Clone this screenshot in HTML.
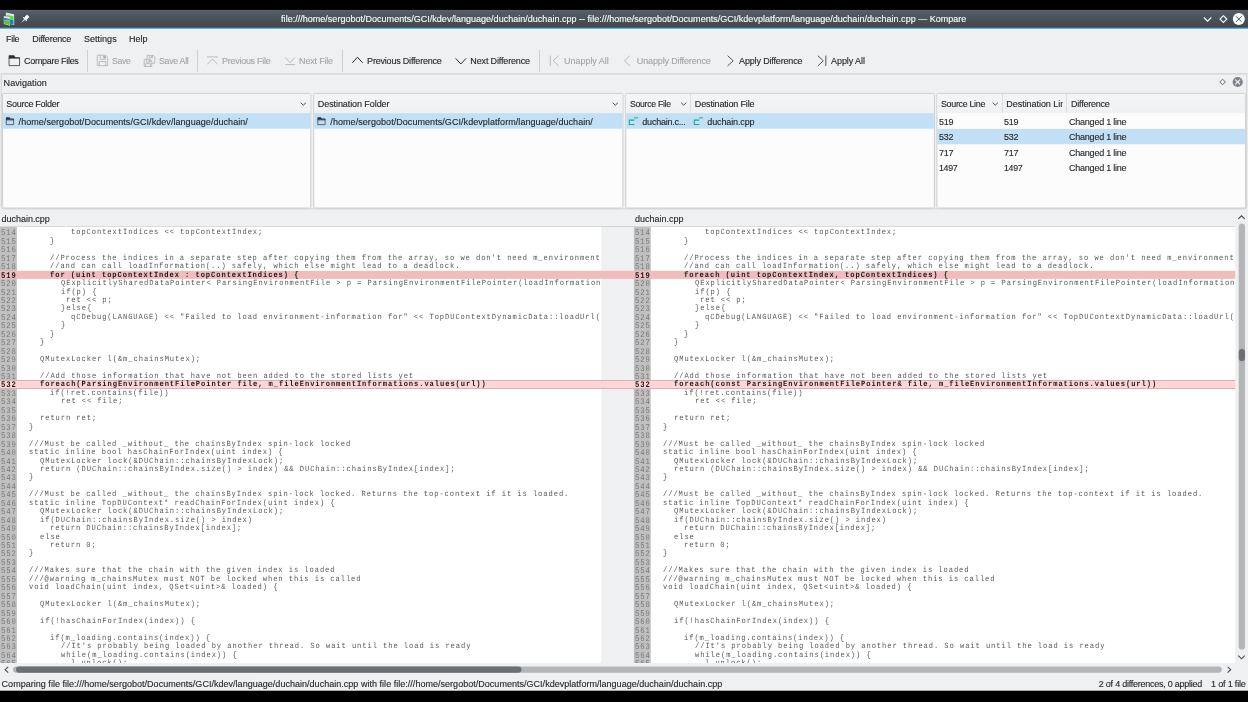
<!DOCTYPE html><html lang="en"><head><meta charset="utf-8"><title>Kompare</title><style>
html,body{margin:0;padding:0;background:#000;}
body{width:1248px;height:702px;position:relative;overflow:hidden;font-family:"Liberation Sans",sans-serif;}
.t{-webkit-text-stroke:0.12px;position:absolute;white-space:pre;line-height:12px;height:12px;transform-origin:0 50%;}
.abs{position:absolute;}
#ui{position:absolute;left:0;top:0;width:1248px;height:702px;will-change:transform;}
.sep{position:absolute;top:50px;height:21px;width:1px;background:#c9cbcd;}
.frame{position:absolute;border:1px solid #c3c5c7;box-sizing:border-box;background:#fcfcfc;border-radius:1.5px;}
.hdr{position:absolute;background:#f3f4f4;box-sizing:border-box;border-bottom:1px solid #e2e3e4;}
.sel{position:absolute;background:#c0e0f5;}
.pane{position:absolute;overflow:hidden;will-change:transform;text-rendering:geometricPrecision;font-family:"Liberation Mono",monospace;font-size:7.9px;letter-spacing:1.037px;color:#585858;}
.gut{position:absolute;left:0;top:0;width:17px;height:100%;background:#c0c0c0;}
.ln{position:absolute;left:0;width:100%;height:8.45px;line-height:8.45px;white-space:pre;}
.ln.b{font-weight:bold;color:#1a1a1a;}
.ln.b .no{color:#1a1a1a;}
.no{position:absolute;left:1.4px;color:#7a7a7a;font-size:8.6px;letter-spacing:1.030px;transform:scale(0.84,1);transform-origin:0 70%;}
.cd{position:absolute;transform:scale(0.9,1.0);transform-origin:0 70%;}
.band{position:absolute;left:0;width:1235.2px;}
</style></head><body>
<svg class="abs" style="left:0;top:0" width="1248" height="702" viewBox="0 0 1248 702" shape-rendering="geometricPrecision">
<defs><linearGradient id="tg" x1="0" y1="0" x2="0" y2="1"><stop offset="0" stop-color="#5a646c"/><stop offset="0.12" stop-color="#525c64"/><stop offset="0.9" stop-color="#42494f"/><stop offset="1" stop-color="#393e43"/></linearGradient><linearGradient id="hg" x1="0" y1="0" x2="0" y2="1"><stop offset="0" stop-color="#f5f5f6"/><stop offset="1" stop-color="#f0f1f2"/></linearGradient></defs>
<rect x="0" y="10.6" width="1248.00" height="680.10" fill="#eff0f1" />
<rect x="0" y="9.9" width="1248.00" height="17.95" fill="url(#tg)" />
<rect x="0" y="27.85" width="1248.00" height="1.10" fill="#3daee9" />
<rect x="0" y="28.95" width="1248.00" height="0.85" fill="#fbfbfb" />
<rect x="0" y="73.5" width="1248.00" height="0.90" fill="#d0d2d4" />
<rect x="87.2" y="49.8" width="0.80" height="21.80" fill="#c6c8ca" />
<rect x="197.2" y="49.8" width="0.80" height="21.80" fill="#c6c8ca" />
<rect x="342.2" y="49.8" width="0.80" height="21.80" fill="#c6c8ca" />
<rect x="539.2" y="49.8" width="0.80" height="21.80" fill="#c6c8ca" />
<rect x="1.3" y="74.0" width="1245.4" height="134.9" rx="2.2" fill="#eff0f1" stroke="#cdcfd1" stroke-width="0.9"/>
<rect x="2.6" y="93.4" width="308.20" height="114.60" rx="1.3" fill="#fcfcfc" stroke="#c9cbcd" stroke-width="0.9"/>
<rect x="3.1" y="93.9" width="307.20" height="19.20" fill="url(#hg)" />
<rect x="313.7" y="93.4" width="309.20" height="114.60" rx="1.3" fill="#fcfcfc" stroke="#c9cbcd" stroke-width="0.9"/>
<rect x="314.2" y="93.9" width="308.20" height="19.20" fill="url(#hg)" />
<rect x="625.8" y="93.4" width="308.60" height="114.60" rx="1.3" fill="#fcfcfc" stroke="#c9cbcd" stroke-width="0.9"/>
<rect x="626.3" y="93.9" width="307.60" height="19.20" fill="url(#hg)" />
<rect x="936.9" y="93.4" width="308.70" height="114.60" rx="1.3" fill="#fcfcfc" stroke="#c9cbcd" stroke-width="0.9"/>
<rect x="937.4" y="93.9" width="307.70" height="19.20" fill="url(#hg)" />
<rect x="3.1" y="113.1" width="307.20" height="15.65" fill="#c2e0f5" />
<rect x="314.2" y="113.1" width="308.20" height="15.65" fill="#c2e0f5" />
<rect x="626.3" y="113.1" width="307.60" height="15.65" fill="#c2e0f5" />
<rect x="937.4" y="128.9" width="307.70" height="15.40" fill="#c2e0f5" />
<rect x="690.2" y="94.0" width="0.80" height="18.80" fill="#d6d8d9" />
<rect x="1002.0" y="94.0" width="0.80" height="18.80" fill="#d6d8d9" />
<rect x="1066.2" y="94.0" width="0.80" height="18.80" fill="#d6d8d9" />
<rect x="0" y="226.0" width="1235.20" height="0.80" fill="#c9cbcd" />
<rect x="0" y="226.8" width="601.30" height="436.20" fill="#ffffff" />
<rect x="633.9" y="226.8" width="601.30" height="436.20" fill="#ffffff" />
<rect x="0" y="226.8" width="16.90" height="436.20" fill="#c0c0c0" />
<rect x="633.9" y="226.8" width="16.80" height="436.20" fill="#c0c0c0" />
<rect x="0" y="270.8" width="1235.20" height="8.05" fill="#f0bcbc" />
<rect x="0" y="380.0" width="1235.20" height="8.80" fill="#ffd6d6" />
<rect x="0" y="380.0" width="1235.20" height="0.70" fill="#d29c9c" />
<rect x="0" y="388.1" width="1235.20" height="0.70" fill="#d29c9c" />
<rect x="1238.7" y="223.6" width="6.3" height="426.0" rx="3.15" fill="#b3b5b7"/>
<rect x="1238.7" y="348.9" width="6.3" height="12.2" rx="3.15" fill="#6c6f73"/>
<rect x="13.0" y="666.4" width="1208.8" height="6.3" rx="3.15" fill="#b3b5b7"/>
<rect x="16.0" y="666.4" width="505.5" height="6.3" rx="3.15" fill="#6c6f73"/>
</svg>
<div class="pane" style="left:0px;width:601.30px;top:226.8px;height:436.20px">
<div class="ln" style="top:2.35px"><span class="no">514</span><span class="cd" style="left:70.90px">topContextIndices &lt;&lt; topContextIndex;</span></div>
<div class="ln" style="top:10.80px"><span class="no">515</span><span class="cd" style="left:50.10px">}</span></div>
<div class="ln" style="top:19.25px"><span class="no">516</span><span class="cd" style="left:29.30px"></span></div>
<div class="ln" style="top:27.70px"><span class="no">517</span><span class="cd" style="left:50.10px">//Process the indices in a separate step after copying them from the array, so we don't need m_environment</span></div>
<div class="ln" style="top:36.15px"><span class="no">518</span><span class="cd" style="left:50.10px">//and can call loadInformation(..) safely, which else might lead to a deadlock.</span></div>
<div class="ln b" style="top:44.60px"><span class="no">519</span><span class="cd" style="left:50.10px">for (uint topContextIndex : topContextIndices) {</span></div>
<div class="ln" style="top:53.05px"><span class="no">520</span><span class="cd" style="left:60.50px">QExplicitlySharedDataPointer&lt; ParsingEnvironmentFile &gt; p = ParsingEnvironmentFilePointer(loadInformation</span></div>
<div class="ln" style="top:61.50px"><span class="no">521</span><span class="cd" style="left:60.50px">if(p) {</span></div>
<div class="ln" style="top:69.95px"><span class="no">522</span><span class="cd" style="left:65.70px">ret &lt;&lt; p;</span></div>
<div class="ln" style="top:78.40px"><span class="no">523</span><span class="cd" style="left:60.50px">}else{</span></div>
<div class="ln" style="top:86.85px"><span class="no">524</span><span class="cd" style="left:70.90px">qCDebug(LANGUAGE) &lt;&lt; "Failed to load environment-information for" &lt;&lt; TopDUContextDynamicData::loadUrl(</span></div>
<div class="ln" style="top:95.30px"><span class="no">525</span><span class="cd" style="left:60.50px">}</span></div>
<div class="ln" style="top:103.75px"><span class="no">526</span><span class="cd" style="left:50.10px">}</span></div>
<div class="ln" style="top:112.20px"><span class="no">527</span><span class="cd" style="left:39.70px">}</span></div>
<div class="ln" style="top:120.65px"><span class="no">528</span><span class="cd" style="left:29.30px"></span></div>
<div class="ln" style="top:129.10px"><span class="no">529</span><span class="cd" style="left:39.70px">QMutexLocker l(&amp;m_chainsMutex);</span></div>
<div class="ln" style="top:137.55px"><span class="no">530</span><span class="cd" style="left:29.30px"></span></div>
<div class="ln" style="top:146.00px"><span class="no">531</span><span class="cd" style="left:39.70px">//Add those information that have not been added to the stored lists yet</span></div>
<div class="ln b" style="top:154.45px"><span class="no">532</span><span class="cd" style="left:39.70px">foreach(ParsingEnvironmentFilePointer file, m_fileEnvironmentInformations.values(url))</span></div>
<div class="ln" style="top:162.90px"><span class="no">533</span><span class="cd" style="left:50.10px">if(!ret.contains(file))</span></div>
<div class="ln" style="top:171.35px"><span class="no">534</span><span class="cd" style="left:60.50px">ret &lt;&lt; file;</span></div>
<div class="ln" style="top:179.80px"><span class="no">535</span><span class="cd" style="left:29.30px"></span></div>
<div class="ln" style="top:188.25px"><span class="no">536</span><span class="cd" style="left:39.70px">return ret;</span></div>
<div class="ln" style="top:196.70px"><span class="no">537</span><span class="cd" style="left:29.30px">}</span></div>
<div class="ln" style="top:205.15px"><span class="no">538</span><span class="cd" style="left:29.30px"></span></div>
<div class="ln" style="top:213.60px"><span class="no">539</span><span class="cd" style="left:29.30px">///Must be called _without_ the chainsByIndex spin-lock locked</span></div>
<div class="ln" style="top:222.05px"><span class="no">540</span><span class="cd" style="left:29.30px">static inline bool hasChainForIndex(uint index) {</span></div>
<div class="ln" style="top:230.50px"><span class="no">541</span><span class="cd" style="left:39.70px">QMutexLocker lock(&amp;DUChain::chainsByIndexLock);</span></div>
<div class="ln" style="top:238.95px"><span class="no">542</span><span class="cd" style="left:39.70px">return (DUChain::chainsByIndex.size() &gt; index) &amp;&amp; DUChain::chainsByIndex[index];</span></div>
<div class="ln" style="top:247.40px"><span class="no">543</span><span class="cd" style="left:29.30px">}</span></div>
<div class="ln" style="top:255.85px"><span class="no">544</span><span class="cd" style="left:29.30px"></span></div>
<div class="ln" style="top:264.30px"><span class="no">545</span><span class="cd" style="left:29.30px">///Must be called _without_ the chainsByIndex spin-lock locked. Returns the top-context if it is loaded.</span></div>
<div class="ln" style="top:272.75px"><span class="no">546</span><span class="cd" style="left:29.30px">static inline TopDUContext* readChainForIndex(uint index) {</span></div>
<div class="ln" style="top:281.20px"><span class="no">547</span><span class="cd" style="left:39.70px">QMutexLocker lock(&amp;DUChain::chainsByIndexLock);</span></div>
<div class="ln" style="top:289.65px"><span class="no">548</span><span class="cd" style="left:39.70px">if(DUChain::chainsByIndex.size() &gt; index)</span></div>
<div class="ln" style="top:298.10px"><span class="no">549</span><span class="cd" style="left:50.10px">return DUChain::chainsByIndex[index];</span></div>
<div class="ln" style="top:306.55px"><span class="no">550</span><span class="cd" style="left:39.70px">else</span></div>
<div class="ln" style="top:315.00px"><span class="no">551</span><span class="cd" style="left:50.10px">return 0;</span></div>
<div class="ln" style="top:323.45px"><span class="no">552</span><span class="cd" style="left:29.30px">}</span></div>
<div class="ln" style="top:331.90px"><span class="no">553</span><span class="cd" style="left:29.30px"></span></div>
<div class="ln" style="top:340.35px"><span class="no">554</span><span class="cd" style="left:29.30px">///Makes sure that the chain with the given index is loaded</span></div>
<div class="ln" style="top:348.80px"><span class="no">555</span><span class="cd" style="left:29.30px">///@warning m_chainsMutex must NOT be locked when this is called</span></div>
<div class="ln" style="top:357.25px"><span class="no">556</span><span class="cd" style="left:29.30px">void loadChain(uint index, QSet&lt;uint&gt;&amp; loaded) {</span></div>
<div class="ln" style="top:365.70px"><span class="no">557</span><span class="cd" style="left:29.30px"></span></div>
<div class="ln" style="top:374.15px"><span class="no">558</span><span class="cd" style="left:39.70px">QMutexLocker l(&amp;m_chainsMutex);</span></div>
<div class="ln" style="top:382.60px"><span class="no">559</span><span class="cd" style="left:29.30px"></span></div>
<div class="ln" style="top:391.05px"><span class="no">560</span><span class="cd" style="left:39.70px">if(!hasChainForIndex(index)) {</span></div>
<div class="ln" style="top:399.50px"><span class="no">561</span><span class="cd" style="left:29.30px"></span></div>
<div class="ln" style="top:407.95px"><span class="no">562</span><span class="cd" style="left:50.10px">if(m_loading.contains(index)) {</span></div>
<div class="ln" style="top:416.40px"><span class="no">563</span><span class="cd" style="left:60.50px">//It's probably being loaded by another thread. So wait until the load is ready</span></div>
<div class="ln" style="top:424.85px"><span class="no">564</span><span class="cd" style="left:60.50px">while(m_loading.contains(index)) {</span></div>
<div class="ln" style="top:433.30px"><span class="no">565</span><span class="cd" style="left:70.90px">l.unlock();</span></div>
</div>
<div class="pane" style="left:633.9px;width:601.30px;top:226.8px;height:436.20px">
<div class="ln" style="top:2.35px"><span class="no">514</span><span class="cd" style="left:70.90px">topContextIndices &lt;&lt; topContextIndex;</span></div>
<div class="ln" style="top:10.80px"><span class="no">515</span><span class="cd" style="left:50.10px">}</span></div>
<div class="ln" style="top:19.25px"><span class="no">516</span><span class="cd" style="left:29.30px"></span></div>
<div class="ln" style="top:27.70px"><span class="no">517</span><span class="cd" style="left:50.10px">//Process the indices in a separate step after copying them from the array, so we don't need m_environment</span></div>
<div class="ln" style="top:36.15px"><span class="no">518</span><span class="cd" style="left:50.10px">//and can call loadInformation(..) safely, which else might lead to a deadlock.</span></div>
<div class="ln b" style="top:44.60px"><span class="no">519</span><span class="cd" style="left:50.10px">foreach (uint topContextIndex, topContextIndices) {</span></div>
<div class="ln" style="top:53.05px"><span class="no">520</span><span class="cd" style="left:60.50px">QExplicitlySharedDataPointer&lt; ParsingEnvironmentFile &gt; p = ParsingEnvironmentFilePointer(loadInformation</span></div>
<div class="ln" style="top:61.50px"><span class="no">521</span><span class="cd" style="left:60.50px">if(p) {</span></div>
<div class="ln" style="top:69.95px"><span class="no">522</span><span class="cd" style="left:65.70px">ret &lt;&lt; p;</span></div>
<div class="ln" style="top:78.40px"><span class="no">523</span><span class="cd" style="left:60.50px">}else{</span></div>
<div class="ln" style="top:86.85px"><span class="no">524</span><span class="cd" style="left:70.90px">qCDebug(LANGUAGE) &lt;&lt; "Failed to load environment-information for" &lt;&lt; TopDUContextDynamicData::loadUrl(</span></div>
<div class="ln" style="top:95.30px"><span class="no">525</span><span class="cd" style="left:60.50px">}</span></div>
<div class="ln" style="top:103.75px"><span class="no">526</span><span class="cd" style="left:50.10px">}</span></div>
<div class="ln" style="top:112.20px"><span class="no">527</span><span class="cd" style="left:39.70px">}</span></div>
<div class="ln" style="top:120.65px"><span class="no">528</span><span class="cd" style="left:29.30px"></span></div>
<div class="ln" style="top:129.10px"><span class="no">529</span><span class="cd" style="left:39.70px">QMutexLocker l(&amp;m_chainsMutex);</span></div>
<div class="ln" style="top:137.55px"><span class="no">530</span><span class="cd" style="left:29.30px"></span></div>
<div class="ln" style="top:146.00px"><span class="no">531</span><span class="cd" style="left:39.70px">//Add those information that have not been added to the stored lists yet</span></div>
<div class="ln b" style="top:154.45px"><span class="no">532</span><span class="cd" style="left:39.70px">foreach(const ParsingEnvironmentFilePointer&amp; file, m_fileEnvironmentInformations.values(url))</span></div>
<div class="ln" style="top:162.90px"><span class="no">533</span><span class="cd" style="left:50.10px">if(!ret.contains(file))</span></div>
<div class="ln" style="top:171.35px"><span class="no">534</span><span class="cd" style="left:60.50px">ret &lt;&lt; file;</span></div>
<div class="ln" style="top:179.80px"><span class="no">535</span><span class="cd" style="left:29.30px"></span></div>
<div class="ln" style="top:188.25px"><span class="no">536</span><span class="cd" style="left:39.70px">return ret;</span></div>
<div class="ln" style="top:196.70px"><span class="no">537</span><span class="cd" style="left:29.30px">}</span></div>
<div class="ln" style="top:205.15px"><span class="no">538</span><span class="cd" style="left:29.30px"></span></div>
<div class="ln" style="top:213.60px"><span class="no">539</span><span class="cd" style="left:29.30px">///Must be called _without_ the chainsByIndex spin-lock locked</span></div>
<div class="ln" style="top:222.05px"><span class="no">540</span><span class="cd" style="left:29.30px">static inline bool hasChainForIndex(uint index) {</span></div>
<div class="ln" style="top:230.50px"><span class="no">541</span><span class="cd" style="left:39.70px">QMutexLocker lock(&amp;DUChain::chainsByIndexLock);</span></div>
<div class="ln" style="top:238.95px"><span class="no">542</span><span class="cd" style="left:39.70px">return (DUChain::chainsByIndex.size() &gt; index) &amp;&amp; DUChain::chainsByIndex[index];</span></div>
<div class="ln" style="top:247.40px"><span class="no">543</span><span class="cd" style="left:29.30px">}</span></div>
<div class="ln" style="top:255.85px"><span class="no">544</span><span class="cd" style="left:29.30px"></span></div>
<div class="ln" style="top:264.30px"><span class="no">545</span><span class="cd" style="left:29.30px">///Must be called _without_ the chainsByIndex spin-lock locked. Returns the top-context if it is loaded.</span></div>
<div class="ln" style="top:272.75px"><span class="no">546</span><span class="cd" style="left:29.30px">static inline TopDUContext* readChainForIndex(uint index) {</span></div>
<div class="ln" style="top:281.20px"><span class="no">547</span><span class="cd" style="left:39.70px">QMutexLocker lock(&amp;DUChain::chainsByIndexLock);</span></div>
<div class="ln" style="top:289.65px"><span class="no">548</span><span class="cd" style="left:39.70px">if(DUChain::chainsByIndex.size() &gt; index)</span></div>
<div class="ln" style="top:298.10px"><span class="no">549</span><span class="cd" style="left:50.10px">return DUChain::chainsByIndex[index];</span></div>
<div class="ln" style="top:306.55px"><span class="no">550</span><span class="cd" style="left:39.70px">else</span></div>
<div class="ln" style="top:315.00px"><span class="no">551</span><span class="cd" style="left:50.10px">return 0;</span></div>
<div class="ln" style="top:323.45px"><span class="no">552</span><span class="cd" style="left:29.30px">}</span></div>
<div class="ln" style="top:331.90px"><span class="no">553</span><span class="cd" style="left:29.30px"></span></div>
<div class="ln" style="top:340.35px"><span class="no">554</span><span class="cd" style="left:29.30px">///Makes sure that the chain with the given index is loaded</span></div>
<div class="ln" style="top:348.80px"><span class="no">555</span><span class="cd" style="left:29.30px">///@warning m_chainsMutex must NOT be locked when this is called</span></div>
<div class="ln" style="top:357.25px"><span class="no">556</span><span class="cd" style="left:29.30px">void loadChain(uint index, QSet&lt;uint&gt;&amp; loaded) {</span></div>
<div class="ln" style="top:365.70px"><span class="no">557</span><span class="cd" style="left:29.30px"></span></div>
<div class="ln" style="top:374.15px"><span class="no">558</span><span class="cd" style="left:39.70px">QMutexLocker l(&amp;m_chainsMutex);</span></div>
<div class="ln" style="top:382.60px"><span class="no">559</span><span class="cd" style="left:29.30px"></span></div>
<div class="ln" style="top:391.05px"><span class="no">560</span><span class="cd" style="left:39.70px">if(!hasChainForIndex(index)) {</span></div>
<div class="ln" style="top:399.50px"><span class="no">561</span><span class="cd" style="left:29.30px"></span></div>
<div class="ln" style="top:407.95px"><span class="no">562</span><span class="cd" style="left:50.10px">if(m_loading.contains(index)) {</span></div>
<div class="ln" style="top:416.40px"><span class="no">563</span><span class="cd" style="left:60.50px">//It's probably being loaded by another thread. So wait until the load is ready</span></div>
<div class="ln" style="top:424.85px"><span class="no">564</span><span class="cd" style="left:60.50px">while(m_loading.contains(index)) {</span></div>
<div class="ln" style="top:433.30px"><span class="no">565</span><span class="cd" style="left:70.90px">l.unlock();</span></div>
</div>
<div id="ui">
<span class="t" id="title" style="left:281.10px;top:13.20px;color:#fcfcfc;font-size:9.0px;letter-spacing:0.0182px">file:///home/sergobot/Documents/GCI/kdev/language/duchain/duchain.cpp -- file:///home/sergobot/Documents/GCI/kdevplatform/language/duchain/duchain.cpp — Kompare</span>
<span class="t" id="m1" style="left:6.35px;top:33.00px;color:#232629;font-size:9.0px;letter-spacing:-0.3000px;transform:scaleX(0.9988)">File</span>
<span class="t" id="m2" style="left:32.35px;top:33.00px;color:#232629;font-size:9.0px;letter-spacing:-0.2059px">Difference</span>
<span class="t" id="m3" style="left:84.10px;top:33.00px;color:#232629;font-size:9.0px;letter-spacing:0.0023px">Settings</span>
<span class="t" id="m4" style="left:129.10px;top:33.00px;color:#232629;font-size:9.0px;letter-spacing:0.0086px">Help</span>
<span class="t" id="t1" style="left:23.85px;top:54.80px;color:#232629;font-size:9.0px;letter-spacing:-0.3000px;transform:scaleX(0.9985)">Compare Files</span>
<span class="t" id="t2" style="left:112.10px;top:54.80px;color:#a3a5a7;font-size:9.0px;letter-spacing:-0.3000px;transform:scaleX(0.9604)">Save</span>
<span class="t" id="t3" style="left:159.10px;top:54.80px;color:#a3a5a7;font-size:9.0px;letter-spacing:-0.3000px;transform:scaleX(0.9807)">Save All</span>
<span class="t" id="t4" style="left:222.10px;top:54.80px;color:#a3a5a7;font-size:9.0px;letter-spacing:-0.2870px">Previous File</span>
<span class="t" id="t5" style="left:299.10px;top:54.80px;color:#a3a5a7;font-size:9.0px;letter-spacing:-0.1906px">Next File</span>
<span class="t" id="t6" style="left:367.10px;top:54.80px;color:#232629;font-size:9.0px;letter-spacing:-0.2013px">Previous Difference</span>
<span class="t" id="t7" style="left:470.35px;top:54.80px;color:#232629;font-size:9.0px;letter-spacing:-0.1550px">Next Difference</span>
<span class="t" id="t8" style="left:564.10px;top:54.80px;color:#a3a5a7;font-size:9.0px;letter-spacing:-0.0438px">Unapply All</span>
<span class="t" id="t9" style="left:636.85px;top:54.80px;color:#a3a5a7;font-size:9.0px;letter-spacing:-0.1439px">Unapply Difference</span>
<span class="t" id="t10" style="left:739.10px;top:54.80px;color:#232629;font-size:9.0px;letter-spacing:-0.1609px">Apply Difference</span>
<span class="t" id="t11" style="left:831.10px;top:54.80px;color:#232629;font-size:9.0px;letter-spacing:-0.0813px">Apply All</span>
<span class="t" id="nav" style="left:3.60px;top:76.60px;color:#232629;font-size:9.0px;letter-spacing:0.0769px">Navigation</span>
<span class="t" id="h1" style="left:6.35px;top:97.60px;color:#232629;font-size:9.0px;letter-spacing:-0.2870px">Source Folder</span>
<span class="t" id="h2" style="left:317.85px;top:97.60px;color:#232629;font-size:9.0px;letter-spacing:-0.0832px">Destination Folder</span>
<span class="t" id="h3" style="left:629.85px;top:97.60px;color:#232629;font-size:9.0px;letter-spacing:-0.3000px;transform:scaleX(0.9661)">Source File</span>
<span class="t" id="h4" style="left:694.85px;top:97.60px;color:#232629;font-size:9.0px;letter-spacing:-0.1551px">Destination File</span>
<span class="t" id="h5" style="left:941.10px;top:97.60px;color:#232629;font-size:9.0px;letter-spacing:-0.3000px;transform:scaleX(0.9844)">Source Line</span>
<div class="abs" style="left:1006.35px;top:97.60px;width:56.65px;height:12px;overflow:hidden"><span class="t" id="h6" style="left:0;top:0;color:#232629;font-size:9.0px;letter-spacing:-0.0531px">Destination Lin</span></div>
<span class="t" id="h7" style="left:1071.10px;top:97.60px;color:#232629;font-size:9.0px;letter-spacing:-0.2559px">Difference</span>
<span class="t" id="r1" style="left:18.60px;top:115.70px;color:#232629;font-size:9.0px;letter-spacing:0.0521px">/home/sergobot/Documents/GCI/kdev/language/duchain/</span>
<span class="t" id="r2" style="left:330.35px;top:115.70px;color:#232629;font-size:9.0px;letter-spacing:0.0575px">/home/sergobot/Documents/GCI/kdevplatform/language/duchain/</span>
<span class="t" id="r3" style="left:642.35px;top:115.70px;color:#232629;font-size:9.0px;letter-spacing:-0.2276px">duchain.c...</span>
<span class="t" id="r4" style="left:707.35px;top:115.70px;color:#232629;font-size:9.0px;letter-spacing:-0.1361px">duchain.cpp</span>
<span class="t" id="d0a" style="left:939.20px;top:115.70px;color:#232629;font-size:9.0px;letter-spacing:-0.3000px;transform:scaleX(0.9978)">519</span>
<span class="t" id="d0b" style="left:1004.20px;top:115.70px;color:#232629;font-size:9.0px;letter-spacing:-0.3000px;transform:scaleX(0.9978)">519</span>
<span class="t" id="d0c" style="left:1069.00px;top:115.70px;color:#232629;font-size:9.0px;letter-spacing:-0.2259px">Changed 1 line</span>
<span class="t" id="d1a" style="left:939.20px;top:130.90px;color:#232629;font-size:9.0px;letter-spacing:-0.3000px;transform:scaleX(0.9978)">532</span>
<span class="t" id="d1b" style="left:1004.20px;top:130.90px;color:#232629;font-size:9.0px;letter-spacing:-0.3000px;transform:scaleX(0.9978)">532</span>
<span class="t" id="d1c" style="left:1069.00px;top:130.90px;color:#232629;font-size:9.0px;letter-spacing:-0.2259px">Changed 1 line</span>
<span class="t" id="d2a" style="left:939.20px;top:146.50px;color:#232629;font-size:9.0px;letter-spacing:-0.3000px;transform:scaleX(0.9978)">717</span>
<span class="t" id="d2b" style="left:1004.20px;top:146.50px;color:#232629;font-size:9.0px;letter-spacing:-0.3000px;transform:scaleX(0.9978)">717</span>
<span class="t" id="d2c" style="left:1069.00px;top:146.50px;color:#232629;font-size:9.0px;letter-spacing:-0.2259px">Changed 1 line</span>
<span class="t" id="d3a" style="left:939.20px;top:162.10px;color:#232629;font-size:9.0px;letter-spacing:-0.3000px;transform:scaleX(0.9771)">1497</span>
<span class="t" id="d3b" style="left:1004.20px;top:162.10px;color:#232629;font-size:9.0px;letter-spacing:-0.3000px;transform:scaleX(0.9771)">1497</span>
<span class="t" id="d3c" style="left:1069.00px;top:162.10px;color:#232629;font-size:9.0px;letter-spacing:-0.2259px">Changed 1 line</span>
<span class="t" id="f1" style="left:1.60px;top:212.60px;color:#232629;font-size:9.0px;letter-spacing:-0.0315px">duchain.cpp</span>
<span class="t" id="f2" style="left:635.10px;top:212.60px;color:#232629;font-size:9.0px;letter-spacing:-0.0224px">duchain.cpp</span>
<span class="t" id="s1" style="left:1.60px;top:678.20px;color:#232629;font-size:9.0px;letter-spacing:0.0250px">Comparing file file:///home/sergobot/Documents/GCI/kdev/language/duchain/duchain.cpp with file file:///home/sergobot/Documents/GCI/kdevplatform/language/duchain/duchain.cpp</span>
<span class="t" id="s2" style="left:1098.85px;top:678.20px;color:#232629;font-size:9.0px;letter-spacing:-0.2456px">2 of 4 differences, 0 applied</span>
<span class="t" id="s3" style="left:1211.10px;top:678.20px;color:#232629;font-size:9.0px;letter-spacing:-0.1801px">1 of 1 file</span>
</div>
<svg class="abs" style="left:0;top:0" width="1248" height="702" viewBox="0 0 1248 702" fill="none" stroke-linecap="butt" stroke-linejoin="miter">
<g stroke="none"><polygon points="5.9,12.5 14.1,14.2 14.25,25.0 5.9,23.2" fill="#d9e5f3"/><polygon points="6.3,14.7 13.5,16.2 13.5,19.9 6.3,18.9" fill="#5fe03e"/><polygon points="6.3,19.1 13.5,20.1 13.5,24.5 6.3,22.9" fill="#1e7fc2"/><polygon points="3.8,16.0 10.0,17.3 10.0,25.7 3.8,23.9" fill="#dcecc6"/><polygon points="4.0,17.7 9.8,18.9 9.8,20.7 4.0,19.7" fill="#5068ee"/><polygon points="4.0,20.0 9.8,21.0 9.8,25.3 4.0,23.6" fill="#55c62c"/></g>
<g fill="#fcfcfc" stroke="none" transform="translate(24.7 19.3) rotate(45)"><rect x="-1.65" y="-5.0" width="3.3" height="4.3" rx="0.7"/><rect x="-2.6" y="-0.9" width="5.2" height="1.1" rx="0.3"/><path d="M-0.6 0.1 H0.6 L0.15 4.5 H-0.15 Z"/></g>
<path d="M1203.9 17.5 L1207.6 21.2 L1211.3 17.5" stroke="#fcfcfc" stroke-width="1.15"/>
<path d="M1223.4 15.7 L1226.8 19.1 L1223.4 22.5 L1220.0 19.1 Z" stroke="#fcfcfc" stroke-width="1.15"/>
<circle cx="1238.8" cy="19.1" r="6.0" fill="#fcfcfc" stroke="none"/>
<path d="M1236.0 16.3 L1241.6 21.9 M1241.6 16.3 L1236.0 21.9" stroke="#3f464d" stroke-width="0.9"/>
<path d="M9.05 57.75 H19.55 V65.6 H9.05 Z" stroke="#2a2d31" stroke-width="0.75"/>
<path d="M8.7 55.3 H14.1 L15.5 57.5 H19.9 V58.5 H8.7 Z" fill="#2a2d31" stroke="none"/>
<path d="M97.30 55.25 H105.68 L107.65 57.22 V65.65 H97.30 Z" stroke="#a9acae" stroke-width="0.75"/><path d="M100.30 55.25 V59.31 H105.48 V55.25" stroke="#a9acae" stroke-width="0.75"/><rect x="103.30" y="55.98" width="1.76" height="2.50" fill="#a9acae" stroke="none"/><path d="M99.27 65.65 V61.49 H105.68 V65.65" stroke="#a9acae" stroke-width="0.75"/>
<path d="M147.2 59.0 V55.35 H153.35 L154.8 56.8 V63.2 H152.0" stroke="#a9acae" stroke-width="0.75"/>
<path d="M149.4 55.35 V57.7 H152.4 V55.35" stroke="#a9acae" stroke-width="0.7"/>
<rect x="151.3" y="55.8" width="1.2" height="1.6" fill="#a9acae" stroke="none"/>
<path d="M144.20 59.30 H150.27 L151.70 60.72 V66.50 H144.20 Z" stroke="#a9acae" stroke-width="0.75"/><path d="M146.38 59.30 V62.11 H150.12 V59.30" stroke="#a9acae" stroke-width="0.75"/><rect x="148.55" y="59.80" width="1.28" height="1.73" fill="#a9acae" stroke="none"/><path d="M145.62 66.50 V63.62 H150.27 V66.50" stroke="#a9acae" stroke-width="0.75"/>
<path d="M207 56.9 H217.9" stroke="#a9acae" stroke-width="0.75"/>
<path d="M207.4 64.3 L212.45 59.0 L217.5 64.3" stroke="#a9acae" stroke-width="0.75"/>
<path d="M285 64.6 H295.2" stroke="#a9acae" stroke-width="0.75"/>
<path d="M285.3 57.5 L290.1 62.6 L294.9 57.5" stroke="#a9acae" stroke-width="0.75"/>
<path d="M352.3 62.8 L357.45 57.2 L362.6 62.8" stroke="#2a2d31" stroke-width="1.0"/>
<path d="M455.7 58.4 L460.85 64.0 L466.0 58.4" stroke="#2a2d31" stroke-width="1.0"/>
<path d="M550.3 55.6 V65.8" stroke="#a9acae" stroke-width="0.8"/>
<path d="M558.6 55.7 L553.0 60.7 L558.6 65.7" stroke="#a9acae" stroke-width="0.8"/>
<path d="M630.0 55.7 L624.4 60.8 L630.0 65.9" stroke="#a9acae" stroke-width="0.8"/>
<path d="M727.6 55.7 L733.2 60.8 L727.6 65.9" stroke="#2a2d31" stroke-width="0.8"/>
<path d="M817.9 55.7 L823.3 60.8 L817.9 65.9" stroke="#2a2d31" stroke-width="0.8"/>
<path d="M825.8 55.6 V65.9" stroke="#2a2d31" stroke-width="0.8"/>
<path d="M1222.6 79.2 L1225.4 82.0 L1222.6 84.8 L1219.8 82.0 Z" stroke="#5f6367" stroke-width="0.95"/>
<circle cx="1237.7" cy="82.0" r="5.1" fill="#7f8388" stroke="none"/>
<path d="M1235.3 79.6 L1240.1 84.4 M1240.1 79.6 L1235.3 84.4" stroke="#f4f5f5" stroke-width="1.15"/>
<path d="M300.7 102.7 L303.3 105.2 L305.90000000000003 102.7" stroke="#3f4347" stroke-width="0.95"/>
<path d="M612.6999999999999 102.7 L615.3 105.2 L617.9 102.7" stroke="#3f4347" stroke-width="0.95"/>
<path d="M681.1 102.7 L683.7 105.2 L686.3000000000001 102.7" stroke="#3f4347" stroke-width="0.95"/>
<path d="M992.6999999999999 102.7 L995.3 105.2 L997.9 102.7" stroke="#3f4347" stroke-width="0.95"/>
<path d="M6.30 119.0 H13.60 V124.65 H6.30 Z" stroke="#2b3440" stroke-width="0.7"/>
<path d="M5.95 117.3 H9.50 L10.30 118.7 H13.95 V119.7 H5.95 Z" fill="#2b3440" stroke="none"/>
<path d="M6.30 120.6 H13.60" stroke="#2b3440" stroke-width="0.45" opacity="0.8"/>
<path d="M317.80 119.0 H325.10 V124.65 H317.80 Z" stroke="#2b3440" stroke-width="0.7"/>
<path d="M317.45 117.3 H321.00 L321.80 118.7 H325.45 V119.7 H317.45 Z" fill="#2b3440" stroke="none"/>
<path d="M317.80 120.6 H325.10" stroke="#2b3440" stroke-width="0.45" opacity="0.8"/>
<path d="M634.30 120.1 H629.30 V124.5 H634.30" stroke="#16a98a" stroke-width="1.05"/>
<rect x="634.30" y="117.1" width="1.3" height="1.45" fill="#16a98a"/><rect x="636.30" y="117.1" width="1.3" height="1.45" fill="#16a98a"/>
<path d="M699.30 120.1 H694.30 V124.5 H699.30" stroke="#16a98a" stroke-width="1.05"/>
<rect x="699.30" y="117.1" width="1.3" height="1.45" fill="#16a98a"/><rect x="701.30" y="117.1" width="1.3" height="1.45" fill="#16a98a"/>
<path d="M1238.3 218.9 L1241.5 215.8 L1244.7 218.9" stroke="#44484c" stroke-width="1.1"/>
<path d="M1238.3 655.7 L1241.5 658.8 L1244.7 655.7" stroke="#44484c" stroke-width="1.1"/>
<path d="M8.2 666.8 L5.1 669.7 L8.2 672.6" stroke="#44484c" stroke-width="1.1"/>
<path d="M1227.6 666.8 L1230.7 669.7 L1227.6 672.6" stroke="#44484c" stroke-width="1.1"/>
</svg>
</body></html>
